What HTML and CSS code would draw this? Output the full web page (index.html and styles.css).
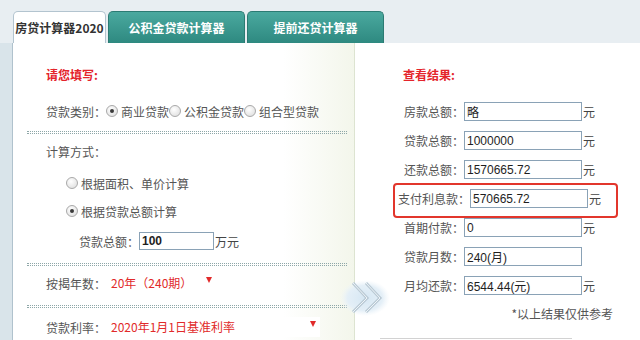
FILE: index.html
```html
<!DOCTYPE html>
<html>
<head>
<meta charset="utf-8">
<link rel="stylesheet" href="styles.css">
</head>
<body>
<div class="page">
  <div class="tabs">
    <div class="tab active">房贷计算器2020</div>
    <div class="tab">公积金贷款计算器</div>
    <div class="tab">提前还贷计算器</div>
  </div>
  <div class="main">
    <div class="left">
      <div class="title">请您填写:</div>
      <div class="row r-type">
        <span class="lbl">贷款类别：</span>
        <span class="radio on"></span><span class="opt o1">商业贷款</span>
        <span class="radio"></span><span class="opt">公积金贷款</span>
        <span class="radio"></span><span class="opt">组合型贷款</span>
      </div>
      <div class="sep s1"></div>
      <div class="row r-mode">计算方式：</div>
      <div class="row r-opt r-opt1"><span class="radio"></span><span class="opt">根据面积、单价计算</span></div>
      <div class="row r-opt r-opt2"><span class="radio on"></span><span class="opt">根据贷款总额计算</span></div>
      <div class="row r-amount">
        <span class="lbl">贷款总额：</span><span class="field f-amount">100</span><span class="unit">万元</span>
      </div>
      <div class="sep s2"></div>
      <div class="row r-years">
        <span class="lbl">按揭年数：</span>
        <span class="select sel1"><span>20年（240期）</span><span class="tri"></span></span>
      </div>
      <div class="sep s3"></div>
      <div class="row r-rate">
        <span class="lbl">贷款利率：</span>
        <span class="select sel2"><span>2020年1月1日基准利率</span><span class="tri"></span></span>
      </div>
    </div>
    <div class="right">
      <div class="title rtitle">查看结果:</div>
      <div class="res"><span class="rl">房款总额：</span><span class="field rf">略</span><span class="unit">元</span></div>
      <div class="res"><span class="rl">贷款总额：</span><span class="field rf">1000000</span><span class="unit">元</span></div>
      <div class="res"><span class="rl">还款总额：</span><span class="field rf">1570665.72</span><span class="unit">元</span></div>
      <div class="res hl"><span class="rl wide">支付利息款：</span><span class="field rf">570665.72</span><span class="unit">元</span></div>
      <div class="res"><span class="rl">首期付款：</span><span class="field rf">0</span><span class="unit">元</span></div>
      <div class="res"><span class="rl">贷款月数：</span><span class="field rf">240(月)</span></div>
      <div class="res"><span class="rl">月均还款：</span><span class="field rf">6544.44(元)</span><span class="unit">元</span></div>
      <div class="note">*以上结果仅供参考</div>
      <div class="bottom-line"></div>
    </div>
    <svg class="arrow" width="50" height="36" viewBox="0 0 50 36">
      <defs>
        <radialGradient id="glow" cx="50%" cy="50%" r="50%">
          <stop offset="0" stop-color="#d6e7f3"/>
          <stop offset="0.7" stop-color="#e4eff7"/>
          <stop offset="1" stop-color="#eef5fa" stop-opacity="0"/>
        </radialGradient>
      </defs>
      <rect x="0" y="0" width="50" height="36" fill="url(#glow)"/>
      <polyline points="13,3 27,18 13,32" fill="none" stroke="#b9c9d4" stroke-width="3"/>
      <polyline points="13,3 27,18 13,32" fill="none" stroke="#eef4f8" stroke-width="1"/>
      <polyline points="26,3 40,18 26,32" fill="none" stroke="#b9c9d4" stroke-width="3"/>
      <polyline points="26,3 40,18 26,32" fill="none" stroke="#eef4f8" stroke-width="1"/>
    </svg>
  </div>
</div>
</body>
</html>
```
FILE: styles.css
```css
* { box-sizing: border-box; margin: 0; padding: 0; }
html, body { width: 640px; height: 340px; overflow: hidden; }
body {
  background: #e8eef2;
  font-family: "Noto Sans CJK SC", "Liberation Sans", sans-serif;
  font-size: 12px;
  color: #555;
}
.page { height: 340px; display: flex; flex-direction: column; }

.tabs { display: flex; gap: 2px; height: 43px; padding: 11px 0 0 13px; }
.tab {
  width: 137px; height: 32px;
  border: 1px solid #2b7b73; border-bottom: none;
  border-radius: 5px 5px 0 0;
  background: linear-gradient(#4aa99f, #2e8980);
  color: #fff; font-weight: bold; font-size: 12px;
  display: flex; align-items: center; justify-content: center;
}
.tab.active { width: 93px; background: #fff; border-color: #b3c4cf; color: #333; }

.main { flex: 1; display: flex; position: relative; padding-left: 12px; background: #d9e4ea; }
.left {
  width: 343px;
  border-left: 1px solid #b0c2cd;
  border-right: 1px solid #dde4d1;
  background: linear-gradient(to right, #fff 0, #fff 270px, #f3f6eb 100%);
  padding-left: 33px;
}
.right { flex: 1; background: #fff; padding-left: 40px; padding-right: 27px; }

.title { height: 24px; line-height: 24px; color: #e4242b; font-weight: bold; font-size: 12px; }
.left .title { margin-top: 20px; }
.rtitle { margin-top: 20px; margin-left: 8px; }

.row { display: flex; align-items: center; height: 24px; white-space: nowrap; }
.r-type { margin-top: 12px; }
.r-type .opt { margin-left: 3px; }
.r-type .o1 { margin-right: 0; }
.r-mode { margin-top: 5px; }
.r-opt { padding-left: 20px; }
.r-opt .opt { margin-left: 3px; }
.r-opt1 { margin-top: 8px; }
.r-opt2 { margin-top: 4px; }
.r-amount { margin-top: 7px; height: 22px; padding-left: 33px; }
.r-years { margin-top: 5px; }
.r-rate { margin-top: 7px; }

.sep {
  height: 3px; margin-left: -19px; width: 320px;
  border-top: 1px dotted #8ea7a8; border-bottom: 1px dotted #8ea7a8;
}
.s1 { margin-top: 8px; }
.s2 { margin-top: 11px; }
.s3 { margin-top: 10px; }

.radio {
  width: 12px; height: 12px; border-radius: 50%;
  border: 1px solid #a9a9a9;
  background: radial-gradient(circle at 40% 35%, #fff, #dadada);
  display: inline-block; position: relative; flex: none;
}
.radio.on::after {
  content: ""; position: absolute; left: 3px; top: 3px;
  width: 4px; height: 4px; border-radius: 50%; background: #3a3a3a;
}

.field {
  display: inline-flex; align-items: center;
  border: 1px solid #8aa2b6;
  background: #fff; color: #1e1e1e;
  font-family: "Liberation Sans", "Noto Sans CJK SC", sans-serif;
  font-size: 12px; padding-left: 2px;
}
.f-amount { width: 75px; height: 18px; font-weight: bold; }
.unit { margin-left: 1px; color: #444; }

.select {
  display: inline-flex; justify-content: space-between; align-items: flex-start;
  color: #e12a2a; padding-left: 5px; height: 20px; line-height: 20px;
}
.sel1 { width: 110px; }
.sel2 { width: 214px; background: #fff; }
.tri {
  width: 0; height: 0; margin-top: 4px; margin-right: 4px;
  border-left: 3.5px solid transparent; border-right: 3.5px solid transparent;
  border-top: 6px solid #e12a2a;
}

.res { display: flex; align-items: center; height: 29px; position: relative; }
.res:first-of-type { }
.rtitle + .res { margin-top: 10px; }
.rl { width: 69px; text-align: right; white-space: nowrap; }
.rl.wide { width: 75px; }
.rf { width: 118px; height: 19px; }
.hl::after {
  content: ""; position: absolute; left: -2px; top: -1px;
  width: 221px; height: 31px;
  border: 2px solid #e2362c; border-radius: 4px;
}

.note { margin-top: 4px; height: 20px; line-height: 20px; text-align: right; color: #555; }
.bottom-line { margin-top: 14px; margin-left: -15px; width: 192px; border-top: 1px solid #d2d2d2; }

.arrow { position: absolute; left: 340px; top: 237px; }
```
